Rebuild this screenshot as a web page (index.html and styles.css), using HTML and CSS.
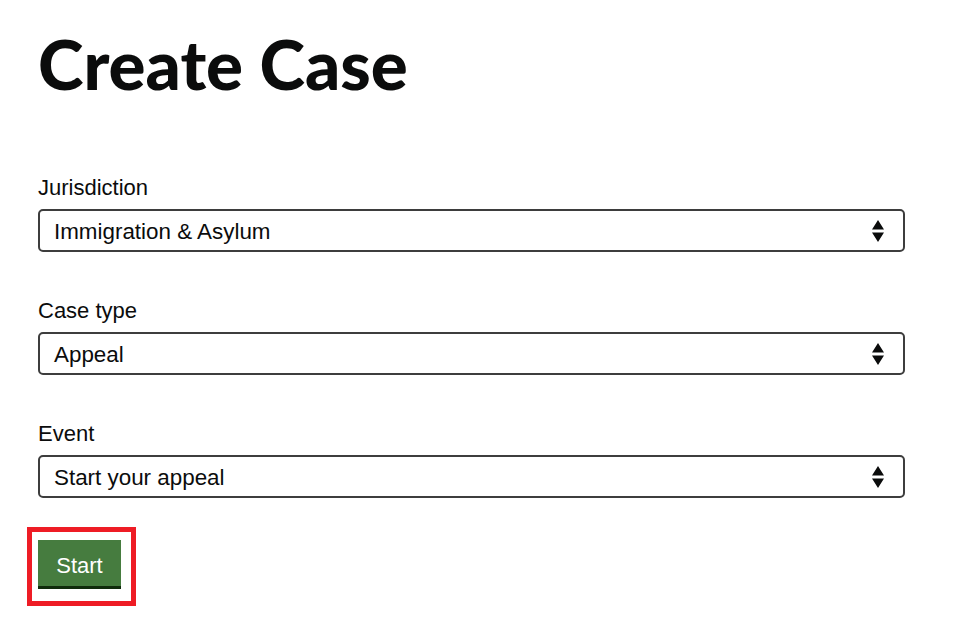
FILE: index.html
```html
<!DOCTYPE html>
<html>
<head>
<meta charset="utf-8">
<link rel="stylesheet" href="styles.css">
</head>
<body>
<main class="page">
  <h1 class="title">Create Case</h1>
  <form class="form">
    <div class="field">
      <label class="label">Jurisdiction</label>
      <div class="select"><span>Immigration &amp; Asylum</span><svg class="arrows" width="12" height="22" viewBox="0 0 12 22"><path d="M6 0 L12 9.5 H0 Z M6 22 L12 12.5 H0 Z" fill="#0b0c0c"/></svg></div>
    </div>
    <div class="field">
      <label class="label">Case type</label>
      <div class="select"><span>Appeal</span><svg class="arrows" width="12" height="22" viewBox="0 0 12 22"><path d="M6 0 L12 9.5 H0 Z M6 22 L12 12.5 H0 Z" fill="#0b0c0c"/></svg></div>
    </div>
    <div class="field">
      <label class="label">Event</label>
      <div class="select"><span>Start your appeal</span><svg class="arrows" width="12" height="22" viewBox="0 0 12 22"><path d="M6 0 L12 9.5 H0 Z M6 22 L12 12.5 H0 Z" fill="#0b0c0c"/></svg></div>
    </div>
    <div class="highlight">
      <button type="button" class="button">Start</button>
    </div>
  </form>
</main>
</body>
</html>
```

FILE: styles.css
```css
html, body {
  margin: 0;
  padding: 0;
  background: #ffffff;
}
.page {
  padding: 0 55px 0 38px;
  font-family: "Liberation Sans", Arial, sans-serif;
  color: #0b0c0c;
}
.title {
  margin: 0;
  padding-top: 24px;
  font-family: "Lato", "Liberation Sans", sans-serif;
  font-weight: 900;
  font-size: 69px;
  line-height: 80px;
}
.form {
  display: flex;
  flex-direction: column;
  padding-top: 71px;
}
.field {
  display: flex;
  flex-direction: column;
  margin-bottom: 46px;
}
.label {
  font-size: 22px;
  line-height: 26px;
  margin-bottom: 8px;
}
.select {
  box-sizing: border-box;
  height: 43px;
  width: 867px;
  border: 2px solid #3d3d3d;
  border-radius: 5px;
  display: flex;
  align-items: center;
  justify-content: space-between;
  padding: 3px 19px 0 14px;
  font-size: 22.4px;
}
.arrows {
  display: block;
  margin-top: -3px;
}
.highlight {
  align-self: flex-start;
  margin-top: -17px;
  margin-left: -11px;
  border: 5px solid #ee1c25;
  padding: 8px 10px 12px 6px;
}
.button {
  display: block;
  width: 83px;
  height: 46px;
  margin: 0;
  border: 0;
  background: #467c3f;
  box-shadow: 0 3px 0 #102b0c;
  color: #ffffff;
  font-family: "Liberation Sans", Arial, sans-serif;
  font-size: 22px;
  padding: 5px 0 0 0;
  margin-bottom: 3px;
}
```
